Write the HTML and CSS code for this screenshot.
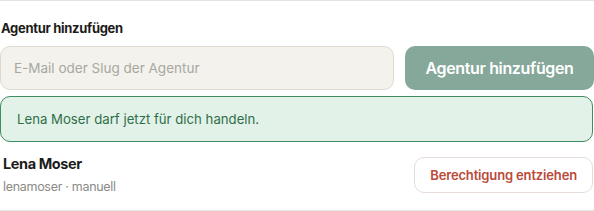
FILE: index.html
```html
<!DOCTYPE html>
<html lang="de">
<head>
<meta charset="utf-8">
<title>Agentur hinzufügen</title>
<link rel="stylesheet" href="styles.css">
</head>
<body>
<section class="panel">
  <h3 class="title">Agentur hinzufügen</h3>
  <form class="add-form">
    <input class="input" type="text" placeholder="E-Mail oder Slug der Agentur">
    <button class="btn-primary" type="button">Agentur hinzufügen</button>
  </form>
  <div class="notice">Lena Moser darf jetzt für dich handeln.</div>
  <div class="agent-row">
    <div class="agent-info">
      <div class="agent-name">Lena Moser</div>
      <div class="agent-meta">lenamoser · manuell</div>
    </div>
    <button class="btn-revoke" type="button">Berechtigung entziehen</button>
  </div>
</section>
</body>
</html>
```
FILE: styles.css
```css
* { box-sizing: border-box; }
html, body { margin: 0; padding: 0; background: #ffffff; }
body {
  font-family: Inter, "Noto Sans", "Liberation Sans", sans-serif;
  color: #1c1c1a;
}
.panel {
  border-top: 1px solid #e6e4df;
  width: 594px;
  padding-top: 19px;
}
.title {
  margin: 0 0 10px 1px;
  font-size: 13px;
  font-weight: 650;
  line-height: 16px;
  letter-spacing: -0.3px;
}
.add-form {
  display: flex;
  gap: 11px;
  margin: 0 0 6px 0;
}
.input {
  flex: 1;
  height: 44px;
  border: 1px solid #dedad0;
  background: #f3f2ec;
  border-radius: 10px;
  padding: 0 13px;
  font-family: inherit;
  font-size: 13.5px;
  letter-spacing: 0;
  color: #333;
  outline: none;
}
.input::placeholder { color: #a8a8a2; }
.btn-primary {
  width: 189px;
  height: 44px;
  border: none;
  border-radius: 10px;
  background: #86a89a;
  color: #ffffff;
  font-family: inherit;
  font-size: 16px;
  font-weight: 600;
  letter-spacing: -0.35px;
}
.notice {
  height: 46px;
  display: flex;
  align-items: center;
  padding: 0 16px;
  background: #e2f2e8;
  border: 1px solid #3f8c60;
  border-radius: 10px;
  color: #2f6e4a;
  font-size: 13.2px;
  letter-spacing: 0;
  width: 593px;
}
.agent-row {
  display: flex;
  align-items: center;
  justify-content: space-between;
  padding: 12px 1px 14px 3px;
  border-bottom: 1px solid #e6e4df;
}
.agent-name {
  font-size: 14.5px;
  font-weight: 650;
  line-height: 20px;
  letter-spacing: -0.4px;
}
.agent-meta {
  margin-top: 4px;
  font-size: 12.5px;
  color: #8a8a86;
  line-height: 18px;
  letter-spacing: -0.3px;
}
.btn-revoke {
  height: 36px;
  padding: 0 15px;
  background: #ffffff;
  border: 1px solid #e6dcd8;
  border-radius: 10px;
  color: #b94a38;
  font-family: inherit;
  font-size: 13px;
  font-weight: 600;
  letter-spacing: -0.15px;
}
```
